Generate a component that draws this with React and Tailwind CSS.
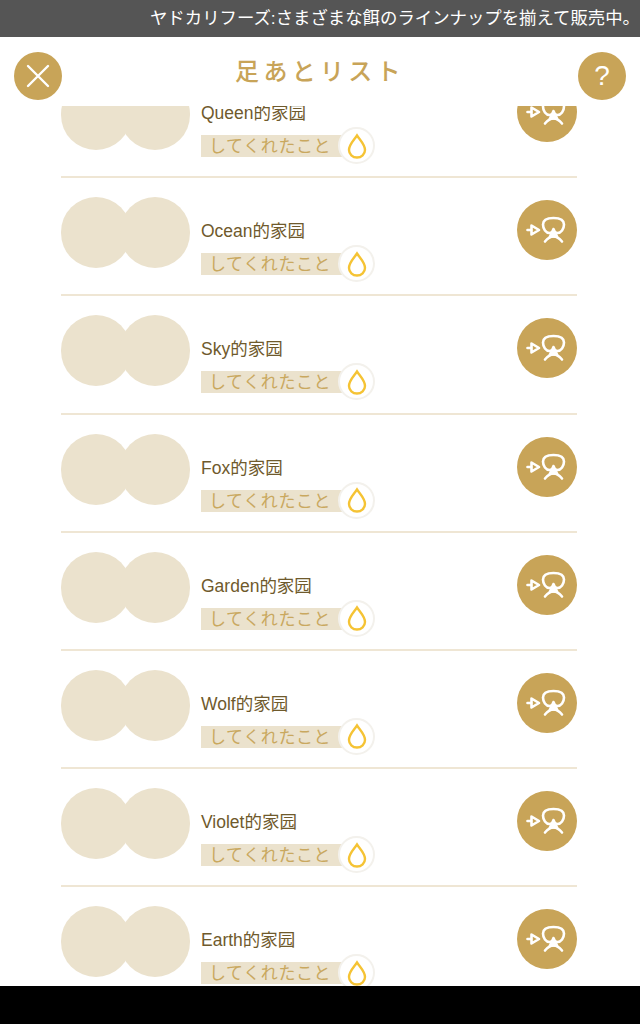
import React from 'react';

const families = ['Queen', 'Ocean', 'Sky', 'Fox', 'Garden', 'Wolf', 'Violet', 'Earth'];

const VisitIcon = () => (
  <svg viewBox="0 0 60 60" className="w-[60px] h-[60px]" fill="none" stroke="white" strokeWidth="2.6" strokeLinecap="round" strokeLinejoin="round">
    <path d="M10.500 30H14" />
    <path d="M14.500 25.500L22 30l-7.500 4.500z" />
    <path d="M36.500 18c6.500 0 10.500 2 10.500 6.500 0 4.500-3 8.500-6.500 8.500-1.500 0-2.500-1-4-1s-2.500 1-4 1c-3.500 0-6.500-4-6.500-8.500 0-4.500 4-6.500 10.500-6.500z" />
    <path d="M36.500 29l-3.500 7.500h7z" fill="white" />
    <path d="M28 41.500c2.500-3 5.500-5 8.500-5s6 2 8.500 5" />
  </svg>
);

const DropIcon = () => (
  <svg viewBox="0 0 20 26" className="w-[20px] h-[26px]" fill="none" stroke="#f5c334" strokeWidth="2.4">
    <path d="M10 2.500C7 7 2 11.500 2 17a8 7.500 0 0 0 16 0C18 11.500 13 7 10 2.500z" />
  </svg>
);

const Row = ({ name }) => (
  <div className="h-[118.2px] shrink-0 border-b-2 border-[#efe6d4] flex justify-between pt-[19px]">
    <div className="flex">
      <div className="flex w-[129px] h-[71px]">
        <div className="w-[70px] h-[71px] rounded-full bg-[#ebe2cd] shrink-0" />
        <div className="w-[70px] h-[71px] rounded-full bg-[#ebe2cd] shrink-0 -ml-[11px]" />
      </div>
      <div className="ml-[11px] pt-[22px]">
        <div className="text-[17.500px] leading-[24px] text-[#6f5a2c]">{name}的家园</div>
        <div className="relative mt-[10px] w-[145px] h-[22px] bg-[#ebe2cd] pl-[8px] text-[17px] leading-[23px] tracking-[0.6px] text-[#c9a85f] whitespace-nowrap">
          してくれたこと
          <div className="absolute left-[137px] -top-[8px] w-[37px] h-[37px] rounded-full bg-white border-2 border-[#f3f1ec] flex items-center justify-center">
            <DropIcon />
          </div>
        </div>
      </div>
    </div>
    <div className="w-[60px] h-[60px] rounded-full bg-[#c8a458] mt-[3px]">
      <VisitIcon />
    </div>
  </div>
);

export default function App() {
  return (
    <div className="w-[640px] h-[1024px] bg-black flex flex-col overflow-hidden font-['Liberation_Sans','Noto_Sans_CJK_JP',sans-serif]">
      <div className="h-[37px] shrink-0 bg-[#555555] text-white text-[17.400px] leading-[37px] whitespace-nowrap flex justify-end overflow-hidden">
        ヤドカリフーズ:さまざまな餌のラインナップを揃えて販売中。
      </div>
      <div className="h-[69px] shrink-0 bg-white flex items-start justify-between px-[14px] pt-[15px]">
        <div className="w-[48px] h-[48px] rounded-full bg-[#c8a458] flex items-center justify-center">
          <svg viewBox="0 0 26 26" className="w-[26px] h-[26px]" stroke="white" strokeWidth="2.4" strokeLinecap="round">
            <path d="M3 3l20 20M23 3L3 23" />
          </svg>
        </div>
        <div className="text-[24px] leading-[40px] tracking-[4.300px] text-[#c8a458] font-medium">足あとリスト</div>
        <div className="w-[48px] h-[48px] rounded-full bg-[#c8a458] flex items-center justify-center text-white text-[28px]">?</div>
      </div>
      <div className="h-[880px] shrink-0 bg-white overflow-hidden pl-[61px] pr-[63px]">
        <div className="-mt-[46px] flex flex-col">
          {families.map((name) => (
            <Row key={name} name={name} />
          ))}
        </div>
      </div>
    </div>
  );
}
